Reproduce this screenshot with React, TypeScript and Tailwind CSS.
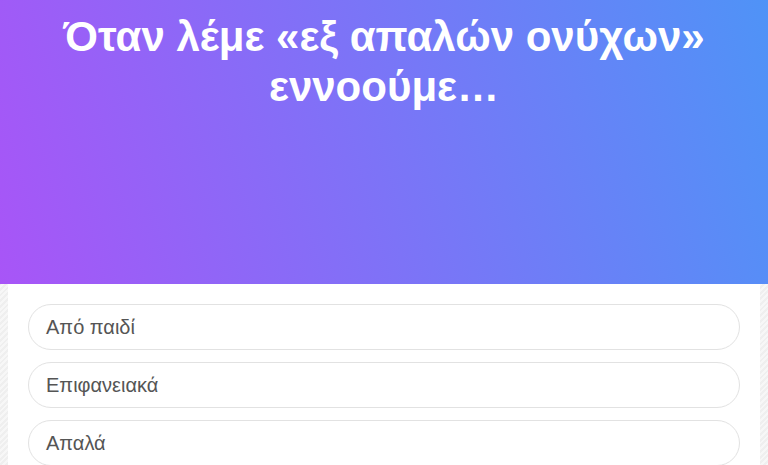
import React from "react";

const options = ["Από παιδί", "Επιφανειακά", "Απαλά"];

export default function App() {
  return (
    <div className="w-[768px] h-[465px] overflow-hidden flex flex-col bg-[repeating-linear-gradient(135deg,#efefef_0px,#efefef_2px,#f7f7f7_2px,#f7f7f7_4px)] font-['Liberation_Sans',Arial,sans-serif]">
      <div className="h-[284px] shrink-0 bg-[linear-gradient(75deg,#a855f7,#4f93f7)] pt-3">
        <h1 className="text-white font-bold text-[42px] leading-[50px] text-center px-4">
          Όταν λέμε «εξ απαλών ονύχων»
          <br />
          εννοούμε…
        </h1>
      </div>
      <div className="mx-2 flex-1 bg-white px-5 pt-5 flex flex-col gap-3">
        {options.map((o) => (
          <div
            key={o}
            className="h-[46px] shrink-0 rounded-full border-[1.5px] border-[#e2e2e2] flex items-center pl-[17px] text-[20px] text-[#555555]"
          >
            {o}
          </div>
        ))}
      </div>
    </div>
  );
}
